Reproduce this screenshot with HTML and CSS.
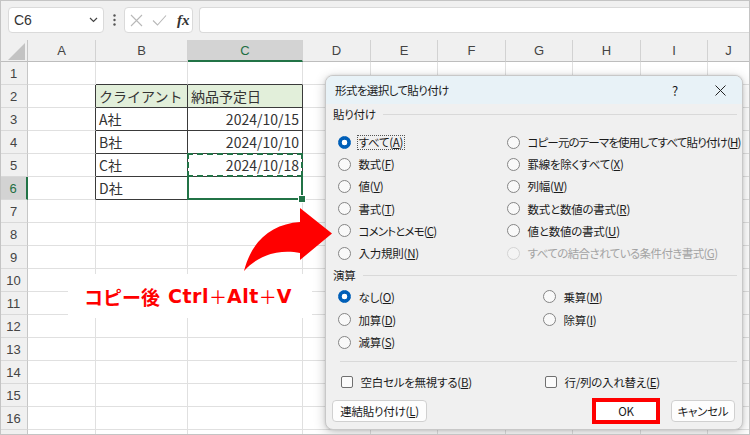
FILE: index.html
```html
<!DOCTYPE html>
<html lang="ja">
<head>
<meta charset="utf-8">
<title>形式を選択して貼り付け</title>
<link rel="stylesheet" href="styles.css">
</head>
<body>
<div class="app">
  <div class="fbar">
    <div class="namebox"><span>C6</span><svg class="chev" width="9" height="6" viewBox="0 0 9 6"><path d="M1 1l3.5 3.5L8 1" fill="none" stroke="#444" stroke-width="1.2"/></svg></div>
    <div class="vdots"><svg width="3" height="12" viewBox="0 0 3 12"><circle cx="1.5" cy="1.5" r="1.2"/><circle cx="1.5" cy="6" r="1.2"/><circle cx="1.5" cy="10.5" r="1.2"/></svg></div>
    <div class="fxbox">
      <svg width="13" height="13" viewBox="0 0 13 13"><path d="M1 1l11 11M12 1L1 12" stroke="#b8b8b8" stroke-width="1.1" fill="none"/></svg>
      <svg width="15" height="13" viewBox="0 0 15 13"><path d="M1 6.5l4.5 4.5L14 1.5" stroke="#b8b8b8" stroke-width="1.1" fill="none"/></svg>
      <span class="fx">fx</span>
    </div>
    <div class="finput"></div>
  </div>

  <div class="sheet">
    <div class="corner"><i></i></div><div class="ch">A</div><div class="ch">B</div><div class="ch sel">C</div><div class="ch">D</div><div class="ch">E</div><div class="ch">F</div><div class="ch">G</div><div class="ch">H</div><div class="ch">I</div><div class="ch">J</div>

    <div class="rh">1</div><div class="c"></div><div class="c bb"></div><div class="c bb"></div><div class="c"></div><div class="c"></div><div class="c"></div><div class="c"></div><div class="c"></div><div class="c"></div><div class="c"></div>

    <div class="rh">2</div><div class="c br"></div><div class="c tc th">クライアント</div><div class="c tc th">納品予定日</div><div class="c"></div><div class="c"></div><div class="c"></div><div class="c"></div><div class="c"></div><div class="c"></div><div class="c"></div>

    <div class="rh">3</div><div class="c br"></div><div class="c tc">A社</div><div class="c tc num">2024/10/15</div><div class="c"></div><div class="c"></div><div class="c"></div><div class="c"></div><div class="c"></div><div class="c"></div><div class="c"></div>

    <div class="rh">4</div><div class="c br"></div><div class="c tc">B社</div><div class="c tc num">2024/10/10</div><div class="c"></div><div class="c"></div><div class="c"></div><div class="c"></div><div class="c"></div><div class="c"></div><div class="c"></div>

    <div class="rh">5</div><div class="c br"></div><div class="c tc">C社</div><div class="c tc num copied">2024/10/18</div><div class="c"></div><div class="c"></div><div class="c"></div><div class="c"></div><div class="c"></div><div class="c"></div><div class="c"></div>

    <div class="rh sel">6</div><div class="c br"></div><div class="c tc">D社</div><div class="c tc active"></div><div class="c"></div><div class="c"></div><div class="c"></div><div class="c"></div><div class="c"></div><div class="c"></div><div class="c"></div>

    <div class="rh">7</div><div class="c"></div><div class="c"></div><div class="c"></div><div class="c"></div><div class="c"></div><div class="c"></div><div class="c"></div><div class="c"></div><div class="c"></div><div class="c"></div>
    <div class="rh">8</div><div class="c"></div><div class="c"></div><div class="c"></div><div class="c"></div><div class="c"></div><div class="c"></div><div class="c"></div><div class="c"></div><div class="c"></div><div class="c"></div>
    <div class="rh">9</div><div class="c"></div><div class="c"></div><div class="c"></div><div class="c"></div><div class="c"></div><div class="c"></div><div class="c"></div><div class="c"></div><div class="c"></div><div class="c"></div>
    <div class="rh">10</div><div class="c"></div><div class="c"></div><div class="c"></div><div class="c"></div><div class="c"></div><div class="c"></div><div class="c"></div><div class="c"></div><div class="c"></div><div class="c"></div>
    <div class="rh">11</div><div class="c"></div><div class="c"></div><div class="c"></div><div class="c"></div><div class="c"></div><div class="c"></div><div class="c"></div><div class="c"></div><div class="c"></div><div class="c"></div>
    <div class="rh">12</div><div class="c"></div><div class="c"></div><div class="c"></div><div class="c"></div><div class="c"></div><div class="c"></div><div class="c"></div><div class="c"></div><div class="c"></div><div class="c"></div>
    <div class="rh">13</div><div class="c"></div><div class="c"></div><div class="c"></div><div class="c"></div><div class="c"></div><div class="c"></div><div class="c"></div><div class="c"></div><div class="c"></div><div class="c"></div>
    <div class="rh">14</div><div class="c"></div><div class="c"></div><div class="c"></div><div class="c"></div><div class="c"></div><div class="c"></div><div class="c"></div><div class="c"></div><div class="c"></div><div class="c"></div>
    <div class="rh">15</div><div class="c"></div><div class="c"></div><div class="c"></div><div class="c"></div><div class="c"></div><div class="c"></div><div class="c"></div><div class="c"></div><div class="c"></div><div class="c"></div>
    <div class="rh">16</div><div class="c"></div><div class="c"></div><div class="c"></div><div class="c"></div><div class="c"></div><div class="c"></div><div class="c"></div><div class="c"></div><div class="c"></div><div class="c"></div>
    <div class="rh"></div><div class="c"></div><div class="c"></div><div class="c"></div><div class="c"></div><div class="c"></div><div class="c"></div><div class="c"></div><div class="c"></div><div class="c"></div><div class="c"></div>
  </div>

  <div class="callout"><span class="jp">コピー後</span><span class="en">Ctrl</span><span class="plus">＋</span><span class="en">Alt</span><span class="plus">＋</span><span class="en">V</span></div>

  <div class="dialog">
    <div class="dtitle"><span class="dt">形式を選択して貼り付け</span><span class="dq">?</span><span class="dx"><svg width="11" height="11" viewBox="0 0 11 11"><path d="M.5.5l10 10M10.5.5l-10 10" stroke="#222" stroke-width="1" fill="none"/></svg></span></div>
    <div class="dbody">
      <div class="ghead g1"><span>貼り付け</span><i class="gline"></i></div>
      <div class="opts paste">
        <div class="opt"><i class="radio on"></i><span class="focus">すべて(<u>A</u>)</span></div>
        <div class="opt"><i class="radio"></i><span class="kt">コピー元のテーマを使用してすべて貼り付け(<u>H</u>)</span></div>
        <div class="opt"><i class="radio"></i><span>数式(<u>F</u>)</span></div>
        <div class="opt"><i class="radio"></i><span>罫線を除くすべて(<u>X</u>)</span></div>
        <div class="opt"><i class="radio"></i><span>値(<u>V</u>)</span></div>
        <div class="opt"><i class="radio"></i><span>列幅(<u>W</u>)</span></div>
        <div class="opt"><i class="radio"></i><span>書式(<u>T</u>)</span></div>
        <div class="opt"><i class="radio"></i><span>数式と数値の書式(<u>R</u>)</span></div>
        <div class="opt"><i class="radio"></i><span class="kt">コメントとメモ(<u>C</u>)</span></div>
        <div class="opt"><i class="radio"></i><span>値と数値の書式(<u>U</u>)</span></div>
        <div class="opt"><i class="radio"></i><span>入力規則(<u>N</u>)</span></div>
        <div class="opt dis"><i class="radio"></i><span class="kt2">すべての結合されている条件付き書式(<u>G</u>)</span></div>
      </div>
      <div class="ghead g2"><span>演算</span><i class="gline"></i></div>
      <div class="opts ops">
        <div class="opt"><i class="radio on"></i><span>なし(<u>O</u>)</span></div>
        <div class="opt"><i class="radio"></i><span>乗算(<u>M</u>)</span></div>
        <div class="opt"><i class="radio"></i><span>加算(<u>D</u>)</span></div>
        <div class="opt"><i class="radio"></i><span>除算(<u>I</u>)</span></div>
        <div class="opt"><i class="radio"></i><span>減算(<u>S</u>)</span></div>
      </div>
      <div class="sep"></div>
      <div class="checks">
        <div class="opt"><i class="check"></i><span>空白セルを無視する(<u>B</u>)</span></div>
        <div class="opt"><i class="check"></i><span>行/列の入れ替え(<u>E</u>)</span></div>
      </div>
      <div class="btns">
        <div class="btn link">連結貼り付け(<u>L</u>)</div>
        <div class="btn ok">OK</div>
        <div class="btn cancel">キャンセル</div>
      </div>
    </div>
  </div>

  <svg class="arrow" width="95" height="70" viewBox="0 0 95 70"><path d="M4 66C12 35 32 19 60 17L60 3L92 28.5L60 55L60 48C45 45 22 46 4 66Z" fill="#ff0000"/></svg>
</div>
</body>
</html>
```

FILE: styles.css
```css
* { box-sizing: border-box; margin: 0; padding: 0; }
body { margin: 0; background: #fff; font-family: "Noto Sans CJK JP", sans-serif; }

.app {
  position: relative;
  width: 750px;
  height: 435px;
  overflow: hidden;
  background: #fff;
}
.app::after {
  content: "";
  position: absolute;
  inset: 0;
  border: 1px solid #c4c4c4;
  pointer-events: none;
  z-index: 5;
}

/* formula bar */
.fbar {
  height: 40px;
  background: #f0f0f0;
  display: flex;
  align-items: center;
  padding-left: 8px;
}
.namebox {
  width: 96px;
  height: 26px;
  background: #fff;
  border: 1px solid #dadada;
  border-radius: 4px;
  display: flex;
  align-items: center;
  justify-content: space-between;
  padding: 0 5px 0 5px;
  font: 14px "Liberation Sans", sans-serif;
  color: #333;
}
.vdots { width: 20px; display: flex; justify-content: center; fill: #555; }
.fxbox {
  width: 69px;
  height: 26px;
  background: #fff;
  border: 1px solid #dadada;
  border-radius: 4px;
  display: flex;
  align-items: center;
  padding-left: 5px;
  gap: 9px;
}
.fx {
  font: italic bold 15px "Liberation Serif", serif;
  color: #333;
  margin-left: 1px;
}
.finput {
  flex: 1;
  height: 26px;
  margin-left: 6px;
  background: #fff;
  border: 1px solid #dadada;
  border-right: none;
  border-radius: 4px 0 0 4px;
}

/* sheet */
.sheet {
  display: grid;
  grid-template-columns: 28px 68px 92px 115px 68px 67px 68px 67px 68px 67px 42px;
  grid-template-rows: 22px repeat(17, 23px);
}
.corner {
  background: #f0f0f0;
  border-right: 1px solid #c6c6c6;
  border-bottom: 1px solid #bdbdbd;
  display: flex;
  align-items: flex-end;
  justify-content: flex-end;
  padding: 0 2px 1px 0;
}
.corner i {
  display: block;
  width: 17px;
  height: 17px;
  background: #c3c3c3;
  clip-path: polygon(100% 0, 100% 100%, 0 100%);
}
.ch {
  background: #f0f0f0;
  border-right: 1px solid #d2d2d2;
  border-bottom: 1px solid #bdbdbd;
  display: flex;
  align-items: center;
  justify-content: center;
  font: 13px "Liberation Sans", sans-serif;
  color: #444;
}
.ch.sel {
  background: #d3d3d3;
  color: #1e6e42;
  border-bottom: 2px solid #217346;
}
.rh {
  background: #f0f0f0;
  border-right: 1px solid #c6c6c6;
  border-bottom: 1px solid #d9d9d9;
  display: flex;
  align-items: center;
  justify-content: center;
  font: 13px "Liberation Sans", sans-serif;
  color: #444;
}
.rh.sel {
  background: #d3d3d3;
  color: #1e6e42;
  border-right: 2px solid #217346;
}
.c {
  position: relative;
  border-right: 1px solid #e0e0e0;
  border-bottom: 1px solid #e0e0e0;
  display: flex;
  align-items: center;
  padding: 0 3px 0 3px;
  font-size: 14px;
  line-height: 1;
  color: #333;
  white-space: nowrap;
}
.c.bb { border-bottom-color: #3a3a3a; }
.c.br { border-right-color: #3a3a3a; }
.c.tc { border-right-color: #3a3a3a; border-bottom-color: #3a3a3a; }
.c.th { background: #e2efda; }
.c.num { justify-content: flex-end; }
.c.copied::after {
  content: "";
  position: absolute;
  left: -1px;
  top: -1px;
  right: -1px;
  bottom: -1px;
  border: 2px dashed #217346;
}
.c.active::after {
  content: "";
  position: absolute;
  left: -1px;
  top: -1px;
  right: -1px;
  bottom: -1px;
  border: 2px solid #217346;
  border-top: none;
}
.c.active::before {
  content: "";
  position: absolute;
  right: -4px;
  bottom: -4px;
  width: 6px;
  height: 6px;
  background: #217346;
  border: 1px solid #fff;
  z-index: 1;
}

/* callout */
.callout {
  position: absolute;
  left: 68px;
  top: 274px;
  width: 244px;
  height: 44px;
  background: #fff;
  display: flex;
  align-items: center;
  padding-left: 16px;
  color: #ff0000;
  font-size: 19px;
  z-index: 1;
  white-space: nowrap;
}
.callout .jp { font-family: "Noto Sans CJK JP", sans-serif; font-weight: 700; margin-right: 8px; }
.callout .en { font-family: "DejaVu Sans", sans-serif; font-weight: 700; letter-spacing: 0.5px; }
.callout .plus { font-family: "Noto Sans CJK JP", sans-serif; font-weight: 400; font-size: 18px; }

.arrow {
  position: absolute;
  left: 240px;
  top: 205px;
  z-index: 4;
}

/* dialog */
.dialog {
  position: absolute;
  left: 325px;
  top: 75px;
  width: 418px;
  height: 355px;
  background: #f0f0f0;
  border: 1px solid #c8c8c8;
  border-radius: 8px;
  box-shadow: 0 3px 12px rgba(0, 0, 0, .22), 0 0 3px rgba(0, 0, 0, .12);
  overflow: hidden;
  font-family: "Noto Sans CJK JP", sans-serif;
  font-size: 11.5px;
  letter-spacing: -0.25px;
  font-feature-settings: "palt";
  color: #1b1b1b;
  z-index: 2;
}
.dtitle {
  height: 28px;
  background: #e8f2f7;
  display: flex;
  align-items: center;
  padding: 0 7px 0 9px;
}
.dt { flex: 1; letter-spacing: -0.6px; }
.dq { width: 20px; text-align: center; font-size: 13px; margin-right: 20px; }
.dx { width: 30px; display: flex; justify-content: center; }

.dbody { padding: 0 5px 0 7px; }
.ghead {
  display: flex;
  align-items: center;
  height: 16px;
  line-height: 16px;
}
.g1 { margin-top: 2px; }
.g2 { margin-top: 3px; }
.gline {
  flex: 1;
  height: 1px;
  background: #d9d9d9;
  margin-left: 7px;
}
.opts { display: grid; padding-left: 5px; }
.paste {
  grid-template-columns: 169px 1fr;
  grid-auto-rows: 22.2px;
  margin-top: 9px;
}
.ops {
  grid-template-columns: 205px 1fr;
  grid-auto-rows: 22.7px;
  margin-top: 2.5px;
}
.opt {
  display: flex;
  align-items: center;
  gap: 7.5px;
  white-space: nowrap;
  line-height: 14px;
}
.kt { letter-spacing: -0.85px; }
.kt2 { letter-spacing: -0.6px; }
.radio {
  display: block;
  width: 13px;
  height: 13px;
  border-radius: 50%;
  border: 1px solid #858585;
  background: #f9f9f9;
  flex: none;
}
.radio.on {
  border-color: #005fb8;
  background: radial-gradient(circle, #fff 0 2.6px, #005fb8 3.1px);
}
.dis { color: #a3a3a3; }
.dis .radio { border-color: #d3d3d3; background: #f4f4f4; }
.focus {
  border: 1px dotted #555;
  padding: 0 1px;
  margin-left: -2px;
  line-height: 13px;
}
u { text-underline-offset: 1px; }

.sep {
  height: 1px;
  background: #d9d9d9;
  margin: 7.6px 0 0 7px;
}
.checks {
  display: grid;
  grid-template-columns: 204px 1fr;
  height: 20px;
  margin-top: 10px;
  padding-left: 8px;
}
.check {
  display: block;
  width: 12px;
  height: 12px;
  border: 1px solid #707070;
  border-radius: 2px;
  background: #fbfbfb;
  flex: none;
}

.btns {
  display: flex;
  align-items: center;
  height: 26px;
  margin-top: 5.3px;
}
.btn {
  height: 22px;
  background: #fdfdfd;
  border: 1px solid #d0d0d0;
  border-radius: 4px;
  display: flex;
  align-items: center;
  justify-content: center;
  white-space: nowrap;
}
.link { width: 95px; margin-left: -1px; }
.ok {
  width: 68px;
  height: 26px;
  border: 4px solid #ff0000;
  border-radius: 0;
  background: #fff;
  margin-left: auto;
}
.cancel { width: 64px; margin-left: 11px; margin-right: 2px; }
```
